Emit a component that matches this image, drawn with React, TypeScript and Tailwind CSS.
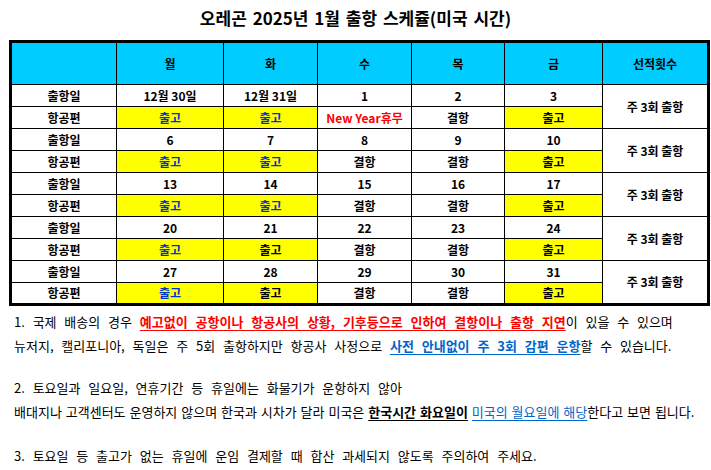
import React from 'react'

type Cell = { t: string; kind?: 'out' | 'outBlue' | 'holiday' | 'plain' }

const weeks: { dates: string[]; flights: Cell[] }[] = [
  {
    dates: ['12월 30일', '12월 31일', '1', '2', '3'],
    flights: [{ t: '출고', kind: 'outBlue' }, { t: '출고', kind: 'outBlue' }, { t: 'New Year휴무', kind: 'holiday' }, { t: '결항' }, { t: '출고', kind: 'out' }],
  },
  {
    dates: ['6', '7', '8', '9', '10'],
    flights: [{ t: '출고', kind: 'outBlue' }, { t: '출고', kind: 'outBlue' }, { t: '결항' }, { t: '결항' }, { t: '출고', kind: 'out' }],
  },
  {
    dates: ['13', '14', '15', '16', '17'],
    flights: [{ t: '출고', kind: 'outBlue' }, { t: '출고', kind: 'outBlue' }, { t: '결항' }, { t: '결항' }, { t: '출고', kind: 'out' }],
  },
  {
    dates: ['20', '21', '22', '23', '24'],
    flights: [{ t: '출고', kind: 'outBlue' }, { t: '출고', kind: 'out' }, { t: '결항' }, { t: '결항' }, { t: '출고', kind: 'out' }],
  },
  {
    dates: ['27', '28', '29', '30', '31'],
    flights: [{ t: '출고', kind: 'outBlue' }, { t: '출고', kind: 'out' }, { t: '결항' }, { t: '결항' }, { t: '출고', kind: 'out' }],
  },
]

const days = ['월', '화', '수', '목', '금']
const cellBase = 'border border-black text-center align-middle p-0'

function flightClass(kind?: Cell['kind']) {
  if (kind === 'outBlue') return 'bg-[#ffff00] text-[#0033cc]'
  if (kind === 'out') return 'bg-[#ffff00] text-black'
  if (kind === 'holiday') return 'text-[#ff0000]'
  return 'text-black'
}

export default function App() {
  return (
    <div className="w-[711px] h-[470px] bg-white text-black overflow-hidden font-['Noto_Sans_CJK_KR','Noto_Sans',sans-serif]">
      {/* 제목 */}
      <div className="h-[40px] flex items-center justify-center text-[17px] font-bold pb-[4px] [word-spacing:2px]">
        오레곤 2025년 1월 출항 스케쥴(미국 시간)
      </div>

      {/* 스케쥴 표 */}
      <div className="pl-[9px]">
        <table className="table-fixed border-collapse border-[3px] border-black w-[698px] text-[12px] font-bold leading-none">
          <colgroup>
            <col className="w-[106px]" />
            <col className="w-[107px]" />
            <col className="w-[94px]" />
            <col className="w-[94px]" />
            <col className="w-[93px]" />
            <col className="w-[98px]" />
            <col className="w-[106px]" />
          </colgroup>
          <thead>
            <tr className="h-[43px] bg-[#00ccff]">
              <th className={cellBase}></th>
              {days.map((d) => (
                <th key={d} className={`${cellBase} font-bold`}>{d}</th>
              ))}
              <th className={`${cellBase} font-bold`}>선적횟수</th>
            </tr>
          </thead>
          <tbody>
            {weeks.map((w, i) => (
              <React.Fragment key={i}>
                <tr className="h-[22px]">
                  <td className={cellBase}>출항일</td>
                  {w.dates.map((d, j) => (
                    <td key={j} className={cellBase}>{d}</td>
                  ))}
                  <td rowSpan={2} className={cellBase}>주 3회 출항</td>
                </tr>
                <tr className="h-[22px]">
                  <td className={cellBase}>항공편</td>
                  {w.flights.map((f, j) => (
                    <td key={j} className={`${cellBase} ${flightClass(f.kind)}`}>{f.t}</td>
                  ))}
                </tr>
              </React.Fragment>
            ))}
          </tbody>
        </table>
      </div>

      {/* 안내 문구 */}
      <div className="pl-[14px] pt-[4px] text-[13px] leading-[24px] whitespace-nowrap [word-spacing:4.9px]">
        <div>
          1. 국제 배송의 경우{' '}
          <span className="text-[#ff0000] font-bold underline decoration-[#ff0000] underline-offset-[3px]">
            예고없이 공항이나 항공사의 상황, 기후등으로 인하여 결항이나 출항 지연
          </span>
          이 있을 수 있으며
        </div>
        <div>
          뉴저지, 캘리포니아, 독일은 주 5회 출항하지만 항공사 사정으로{' '}
          <span className="text-[#0066cc] font-bold underline decoration-[#0066cc] underline-offset-[3px]">
            사전 안내없이 주 3회 감편 운항
          </span>
          할 수 있습니다.
        </div>
        <div className="h-[18px]" />
        <div>2. 토요일과 일요일, 연휴기간 등 휴일에는 화물기가 운항하지 않아</div>
        <div className="[word-spacing:1px]">
          배대지나 고객센터도 운영하지 않으며 한국과 시차가 달라 미국은{' '}
          <span className="font-bold underline underline-offset-[3px]">한국시간 화요일이</span>{' '}
          <span className="text-[#0066cc] underline decoration-[#0066cc] underline-offset-[3px]">미국의 월요일에 해당</span>
          한다고 보면 됩니다.
        </div>
        <div className="h-[20px]" />
        <div>3. 토요일 등 출고가 없는 휴일에 운임 결제할 때 합산 과세되지 않도록 주의하여 주세요.</div>
      </div>
    </div>
  )
}
